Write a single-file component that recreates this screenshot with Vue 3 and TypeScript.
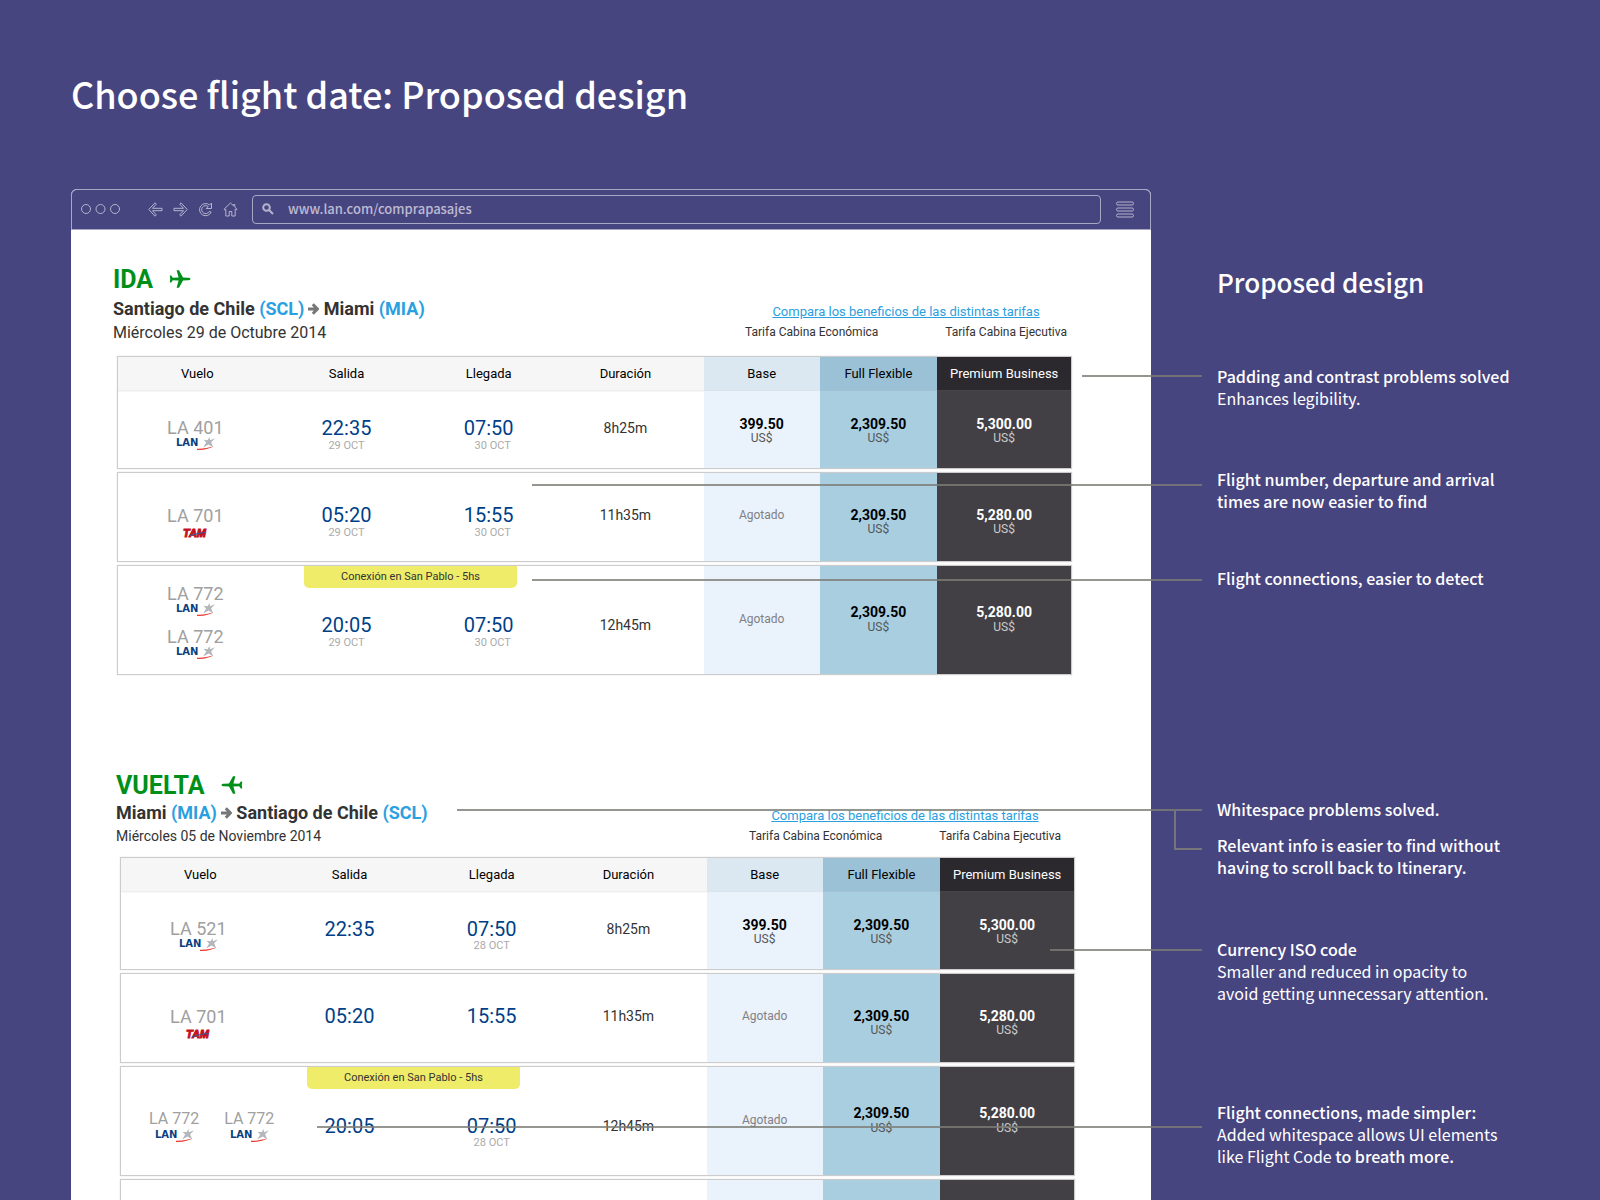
<script setup lang="ts">
interface Fare {
  amount?: string
}

interface Flight {
  codes: string[]
  carrier: 'lan' | 'tam'
  departs: string
  departDate?: string
  arrives: string
  arriveDate?: string
  duration: string
  base: Fare
  flexible: Fare
  premium: Fare
  kind: 'first' | 'plain' | 'linked'
  stop?: string
}

interface Place {
  city: string
  code: string
}

interface Leg {
  id: 'ida' | 'vuelta'
  title: string
  from: Place
  to: Place
  date: string
  flights: Flight[]
  continues?: boolean
}

interface Note {
  id: string
  strong: string
  body?: string
  tail?: string
  reach: number
  drop: number
  branch?: boolean
}

const legs: Leg[] = [
  {
    id: 'ida',
    title: 'IDA',
    from: { city: 'Santiago de Chile', code: '(SCL)' },
    to: { city: 'Miami', code: '(MIA)' },
    date: 'Miércoles 29 de Octubre 2014',
    flights: [
      { codes: ['LA 401'], carrier: 'lan', departs: '22:35', departDate: '29 OCT', arrives: '07:50', arriveDate: '30 OCT', duration: '8h25m', base: { amount: '399.50' }, flexible: { amount: '2,309.50' }, premium: { amount: '5,300.00' }, kind: 'first' },
      { codes: ['LA 701'], carrier: 'tam', departs: '05:20', departDate: '29 OCT', arrives: '15:55', arriveDate: '30 OCT', duration: '11h35m', base: {}, flexible: { amount: '2,309.50' }, premium: { amount: '5,280.00' }, kind: 'plain' },
      { codes: ['LA 772', 'LA 772'], carrier: 'lan', departs: '20:05', departDate: '29 OCT', arrives: '07:50', arriveDate: '30 OCT', duration: '12h45m', base: {}, flexible: { amount: '2,309.50' }, premium: { amount: '5,280.00' }, kind: 'linked', stop: 'Conexión en San Pablo - 5hs' },
    ],
  },
  {
    id: 'vuelta',
    title: 'VUELTA',
    from: { city: 'Miami', code: '(MIA)' },
    to: { city: 'Santiago de Chile', code: '(SCL)' },
    date: 'Miércoles 05 de Noviembre 2014',
    flights: [
      { codes: ['LA 521'], carrier: 'lan', departs: '22:35', arrives: '07:50', arriveDate: '28 OCT', duration: '8h25m', base: { amount: '399.50' }, flexible: { amount: '2,309.50' }, premium: { amount: '5,300.00' }, kind: 'first' },
      { codes: ['LA 701'], carrier: 'tam', departs: '05:20', arrives: '15:55', duration: '11h35m', base: {}, flexible: { amount: '2,309.50' }, premium: { amount: '5,280.00' }, kind: 'plain' },
      { codes: ['LA 772', 'LA 772'], carrier: 'lan', departs: '20:05', arrives: '07:50', arriveDate: '28 OCT', duration: '12h45m', base: {}, flexible: { amount: '2,309.50' }, premium: { amount: '5,280.00' }, kind: 'linked', stop: 'Conexión en San Pablo - 5hs' },
    ],
    continues: true,
  },
]

const notes: Note[] = [
  { id: 'padding', strong: 'Padding and contrast problems solved', body: 'Enhances legibility.', reach: 120, drop: 10 },
  { id: 'times', strong: 'Flight number, departure and arrival times are now easier to find', reach: 670, drop: 16 },
  { id: 'connections', strong: 'Flight connections, easier to detect', reach: 670, drop: 12 },
  { id: 'whitespace', strong: 'Whitespace problems solved.', reach: 745, drop: 11, branch: true },
  { id: 'relevant', strong: 'Relevant info is easier to find without having to scroll back to Itinerary.', reach: 0, drop: 0 },
  { id: 'currency', strong: 'Currency ISO code', body: 'Smaller and reduced in opacity to avoid getting unnecessary attention.', reach: 152, drop: 11 },
  { id: 'simpler', strong: 'Flight connections, made simpler:', body: 'Added whitespace allows UI elements like Flight Code', tail: 'to breath more.', reach: 885, drop: 25 },
]

const fareKeys = ['base', 'flexible', 'premium'] as const
</script>

<template>
  <div class="slide">
    <h1 class="slide-title">Choose flight date: Proposed design</h1>

    <div class="columns">
      <main class="browser">
        <div class="chrome">
          <svg class="dots" width="40" height="12" viewBox="0 0 40 12" aria-hidden="true">
            <circle cx="6" cy="6" r="4.5" /><circle cx="20.5" cy="6" r="4.5" /><circle cx="35" cy="6" r="4.5" />
          </svg>
          <div class="tools">
            <button type="button" aria-label="Atrás">
              <svg width="15" height="15" viewBox="0 0 15 15"><path d="M7 .8 .8 7.5 7 14.2l1.300-1.300L4.500 8.700H14V6.300H4.500l3.800-4.200z" /></svg>
            </button>
            <button type="button" aria-label="Adelante">
              <svg width="15" height="15" viewBox="0 0 15 15"><path d="M8 .8 14.200 7.500 8 14.200l-1.300-1.300 3.800-4.200H1V6.300h9.500L6.700 2.100z" /></svg>
            </button>
            <button type="button" aria-label="Recargar">
              <svg width="15" height="15" viewBox="0 0 15 15"><path d="M13.500 1v5.500H8.200l2-2A4 4 0 1 0 11.200 9.500l2 .6A6.100 6.100 0 1 1 11.600 3z" /></svg>
            </button>
            <button type="button" aria-label="Inicio">
              <svg width="15" height="15" viewBox="0 0 15 15"><path d="M7.500 1 1 7.200l.8.900 1-.9V14h3.400V9.500h2.600V14h3.400V7.200l1 .9.800-.9-2.200-2.100V2.500h-1.400v1.300z" /></svg>
            </button>
          </div>
          <label class="address">
            <svg width="12" height="12" viewBox="0 0 12 12" aria-hidden="true"><circle cx="4.500" cy="4.500" r="3.300" /><path d="M7 7l4 4" /></svg>
            <input type="text" value="www.lan.com/comprapasajes" aria-label="Dirección" />
          </label>
          <button class="menu" type="button" aria-label="Menú">
            <svg width="18" height="17" viewBox="0 0 18 17"><rect x=".5" y="1" width="17" height="3" rx="1.500" /><rect x=".5" y="7" width="17" height="3" rx="1.500" /><rect x=".5" y="13" width="17" height="3" rx="1.500" /></svg>
          </button>
        </div>

        <section v-for="leg in legs" :key="leg.id" class="leg" :class="leg.id">
          <header class="leg-head">
            <div class="trip">
              <h2>
                {{ leg.title }}
                <svg class="plane" width="22" height="20" viewBox="0 0 22 20" aria-hidden="true">
                  <path d="M21.500 10c0 .9-1.300 1.300-2.800 1.300l-4.700.2L10 18.800H7.600l2-7.200-5.800-.4L2.200 13.600H.8L1.200 10 .8 6.400h1.400l1.600 2.400 5.800-.4-2-7.200H10l4 7.300 4.700.2c1.500 0 2.800.4 2.800 1.300z" />
                </svg>
              </h2>
              <p class="route">
                {{ leg.from.city }} <em>{{ leg.from.code }}</em>
                <svg width="11" height="12" viewBox="0 0 11 12" aria-hidden="true"><path d="M0 6h9M4.800 1.300 9.300 6l-4.500 4.700" /></svg>
                {{ leg.to.city }} <em>{{ leg.to.code }}</em>
              </p>
              <p class="date">{{ leg.date }}</p>
            </div>
            <div class="cabins">
              <a href="#tarifas">Compara los beneficios de las distintas tarifas</a>
              <div class="cabin-names">
                <span>Tarifa Cabina Económica</span>
                <span>Tarifa Cabina Ejecutiva</span>
              </div>
            </div>
          </header>

          <table>
            <thead>
              <tr>
                <th scope="col">Vuelo</th>
                <th scope="col">Salida</th>
                <th scope="col">Llegada</th>
                <th scope="col" class="span">Duración</th>
                <th scope="col" class="base">Base</th>
                <th scope="col" class="flexible">Full Flexible</th>
                <th scope="col" class="premium">Premium Business</th>
              </tr>
            </thead>
            <tbody>
              <tr v-for="(flight, i) in leg.flights" :key="i" :class="flight.kind">
                <td class="flight">
                  <div v-for="(code, n) in flight.codes" :key="n" class="code">
                    <span>{{ code }}</span>
                    <svg v-if="flight.carrier === 'lan'" class="lan" width="40" height="14" viewBox="0 0 40 14" role="img" aria-label="LAN">
                      <text x="1" y="9">LAN</text>
                      <path class="star" d="M34.500 0 35 3.200 40 1.200 36.200 5.200 38 10.200 33.600 7.600 28.200 10.600 31.200 5.600 28.500 2.800 32.600 3.200z" />
                      <path class="swoosh" d="M22 11.800c6 .4 11-1.200 16.500-2.200-3.500 1.800-9 3.800-16.500 3.400z" />
                    </svg>
                    <svg v-else class="tam" width="28" height="12" viewBox="0 0 28 12" role="img" aria-label="TAM">
                      <text x="2" y="9">TAM</text>
                      <path d="M8 7.500c5-.3 7-2.500 17-3" />
                    </svg>
                  </div>
                </td>
                <td class="when">
                  <time>{{ flight.departs }}</time>
                  <small v-if="flight.departDate">{{ flight.departDate }}</small>
                </td>
                <td class="when arrival">
                  <time>{{ flight.arrives }}</time>
                  <small v-if="flight.arriveDate">{{ flight.arriveDate }}</small>
                </td>
                <td class="span">{{ flight.duration }}</td>
                <td v-for="key in fareKeys" :key="key" class="fare" :class="[key, { sold: !flight[key].amount }]">
                  <template v-if="flight[key].amount">
                    <b>{{ flight[key].amount }}</b>
                    <abbr>US$</abbr>
                  </template>
                  <template v-else>Agotado</template>
                </td>
                <td v-if="flight.stop" class="stop">{{ flight.stop }}</td>
              </tr>
              <tr v-if="leg.continues" class="plain">
                <td v-for="n in 4" :key="n"></td>
                <td v-for="key in fareKeys" :key="key" :class="key"></td>
              </tr>
            </tbody>
          </table>
        </section>
      </main>

      <aside class="notes">
        <h2>Proposed design</h2>
        <p v-for="note in notes" :key="note.id" class="note" :class="note.id">
          <i v-if="note.reach" class="line" :style="{ width: note.reach + 'px', top: note.drop + 'px' }"></i>
          <i v-if="note.branch" class="branch"></i>
          <strong>{{ note.strong }}</strong>
          <span v-if="note.body" class="body">{{ note.body }} <strong v-if="note.tail">{{ note.tail }}</strong></span>
        </p>
      </aside>
    </div>
  </div>
</template>

<style>
body {
  margin: 0;
  background: #47457f;
}
</style>

<style scoped>
.slide {
  box-sizing: border-box;
  height: 100vh;
  overflow: hidden;
  padding: 64px 0 0 71px;
  background: #47457f;
  color: #fff;
  font-family: "Noto Sans CJK SC", "Noto Sans", sans-serif;
}

h1, h2, p {
  margin: 0;
}

.slide-title {
  font-size: 36px;
  line-height: 58px;
  font-weight: 500;
}

.columns {
  display: grid;
  grid-template-columns: minmax(0, 1fr) 383px;
  column-gap: 66px;
  margin-top: 67px;
}

/* Browser frame */
.browser {
  background: #fff;
  border-radius: 6px 6px 0 0;
  color: #333;
  font-family: Roboto, sans-serif;
}

.chrome {
  box-sizing: border-box;
  display: flex;
  align-items: center;
  height: 41px;
  padding: 0 16px 1px 8px;
  border: 1px solid #a9a7c6;
  border-radius: 6px 6px 0 0;
  background: #47457f;
}

.chrome svg {
  display: block;
  fill: none;
  stroke: #b5b3cd;
}

.chrome button {
  padding: 0;
  border: 0;
  background: none;
}

.tools {
  display: flex;
  gap: 10px;
  margin: 0 14px 0 28px;
}

.address {
  box-sizing: border-box;
  display: flex;
  flex: 1;
  align-items: center;
  gap: 14px;
  height: 29px;
  padding: 0 9px;
  border: 1px solid #a9a7c6;
  border-radius: 4px;
}

.address svg {
  stroke-width: 2;
}

.address input {
  flex: 1;
  min-width: 0;
  height: 20px;
  padding: 0;
  border: 0;
  outline: 0;
  background: none;
  color: #bdbbd3;
  font: 500 13px/20px "Noto Sans CJK SC", "Noto Sans", sans-serif;
}

.menu {
  margin-left: 15px;
}

/* One direction of the trip */
.leg.ida {
  margin: 0 79px 0 42px;
  padding-top: 35px;
}

.leg.vuelta {
  margin: 0 76px 0 45px;
  padding-top: 97px;
}

.leg-head {
  display: flex;
  justify-content: space-between;
  align-items: flex-end;
}

.trip h2 {
  display: flex;
  align-items: center;
  gap: 16px;
  color: #00901a;
  font-size: 25px;
  line-height: 30px;
  font-weight: 700;
}

.plane {
  margin-bottom: 2px;
  fill: #00901a;
}

.vuelta .plane {
  transform: scaleX(-1);
}

.route {
  font-size: 18px;
  line-height: 28px;
  font-weight: 700;
}

.route em {
  color: #2ba0e0;
  font-style: normal;
}

.route svg {
  margin-left: 4px;
  fill: none;
  stroke: #777;
  stroke-width: 3;
}

.date {
  font-size: 16px;
  line-height: 20px;
}

.vuelta .trip h2 {
  line-height: 28px;
}

.vuelta .route {
  line-height: 26px;
}

.vuelta .date {
  font-size: 14px;
}

.cabins {
  display: flex;
  flex-direction: column;
  align-items: center;
  width: 322px;
  margin: 0 5px 1px 0;
  font-size: 12px;
  line-height: 20px;
}

.cabins a {
  color: #2ba0e0;
  font-size: 13px;
}

.vuelta .cabins {
  width: 312px;
  margin: 0 14px 0 0;
}

.cabin-names {
  display: flex;
  justify-content: space-between;
  width: 100%;
}

/* Flight table */
table {
  display: block;
  margin: 13px 0 0 4px;
}

.vuelta table {
  margin-top: 11px;
}

thead,
tbody {
  display: block;
}

tr {
  position: relative;
  box-sizing: border-box;
  display: grid;
  grid-template-columns: 159fr 140fr 145fr 143fr 116fr 118fr 134fr;
  border: 1px solid #ccc;
  box-shadow: 0 0 1px #ccc;
}

thead tr {
  height: 35px;
  border-bottom: 0;
  background: #f6f6f6;
}

tr.first {
  height: 78px;
  border-top: 0;
}

tr.plain {
  height: 90px;
  margin-top: 3px;
}

tr.linked {
  height: 110px;
  margin-top: 3px;
}

th,
td {
  display: block;
  padding: 0;
  text-align: center;
}

th {
  color: #000;
  font-size: 13px;
  line-height: 34px;
  font-weight: 400;
  white-space: nowrap;
}

th.span,
td.span {
  padding-right: 14px;
}

td.base { background: #eaf2fb; }
td.flexible { background: #a8cee0; }
td.premium { background: #424045; color: #fff; }
th.base { background: #dbe8f1; }
th.flexible { background: #9ac1d6; }
th.premium { background: #2b282e; color: #fff; }

.flight {
  display: flex;
  flex-direction: column;
  align-items: center;
  padding: 27px 4px 0 0;
}

.code {
  display: flex;
  flex-direction: column;
  align-items: center;
  color: #a0a0a0;
  font-size: 18px;
  line-height: 20px;
}

.code + .code {
  margin-top: 10px;
}

.plain .flight {
  padding-top: 33px;
}

.linked .flight {
  padding-top: 18px;
}

.vuelta .linked .flight {
  flex-direction: row;
  align-items: flex-start;
  gap: 25px;
  padding: 42px 0 0 28px;
}

.vuelta .linked .code {
  font-size: 16px;
}

.vuelta .linked .code + .code {
  margin-top: 0;
}

.code svg {
  display: block;
}

.lan {
  margin-top: -1px;
}

.vuelta .linked .lan {
  margin-top: 0;
}

.lan text {
  fill: #0b3f80;
  font: 700 10px "DejaVu Sans", sans-serif;
}

.star { fill: #b3b6ba; }
.swoosh { fill: #ea3a31; }

.tam {
  margin-top: 2px;
}

.tam text {
  fill: #c4101d;
  stroke: #c4101d;
  stroke-width: 1;
  font: italic 700 11px "Liberation Sans", sans-serif;
}

.tam path {
  fill: none;
  stroke: #2d5ea8;
}

.when {
  display: flex;
  flex-direction: column;
  align-items: center;
  padding-top: 25px;
}

.plain .when { padding-top: 30px; }
.linked .when { padding-top: 47px; }

.when time {
  color: #003f87;
  font-size: 20px;
  line-height: 24px;
}

.when small {
  color: #aaa;
  font-size: 11px;
  line-height: 12px;
}

.vuelta .when small {
  line-height: 10px;
}

.ida .arrival small {
  padding-left: 8px;
}

td.span {
  padding-top: 27px;
  font-size: 14px;
  line-height: 20px;
}

.plain td.span { padding-top: 32px; }
.linked td.span { padding-top: 49px; }

.fare {
  display: flex;
  flex-direction: column;
  align-items: center;
  padding-top: 26px;
  font-size: 12px;
  line-height: 14px;
}

.plain .fare { padding-top: 35px; }
.linked .fare { gap: 1px; padding-top: 39px; }
.linked .sold { padding-top: 46px; }

.fare b {
  color: #000;
  font-size: 14px;
}

.fare abbr {
  color: #555;
}

.fare.premium b { color: #fff; }
.fare.premium abbr { color: #ccc; }

.sold {
  color: #808085;
}

.stop {
  position: absolute;
  top: 0;
  left: 186px;
  width: 213px;
  border-radius: 0 0 5px 5px;
  background: #efec6a;
  font-size: 11px;
  line-height: 22px;
}

/* Annotations */
.notes {
  padding-top: 73px;
  font-size: 16px;
  line-height: 22px;
}

.notes h2 {
  font-size: 26px;
  line-height: 40px;
  font-weight: 500;
}

.note {
  position: relative;
  width: 310px;
}

.note strong {
  font-weight: 500;
}

.body {
  display: block;
  width: 290px;
}

.padding { margin-top: 63px; }
.times { margin-top: 59px; }
.connections { margin-top: 55px; }
.whitespace { margin-top: 209px; }
.relevant { margin-top: 14px; }
.currency { margin-top: 60px; }
.simpler { margin-top: 97px; }

.line,
.branch {
  position: absolute;
  right: calc(100% + 15px);
}

.line {
  height: 2px;
  background: rgba(124, 124, 118, 0.8);
}

.branch {
  box-sizing: border-box;
  top: 13px;
  width: 28px;
  height: 39px;
  border: solid #76767a;
  border-width: 0 0 2px 2px;
}
</style>
